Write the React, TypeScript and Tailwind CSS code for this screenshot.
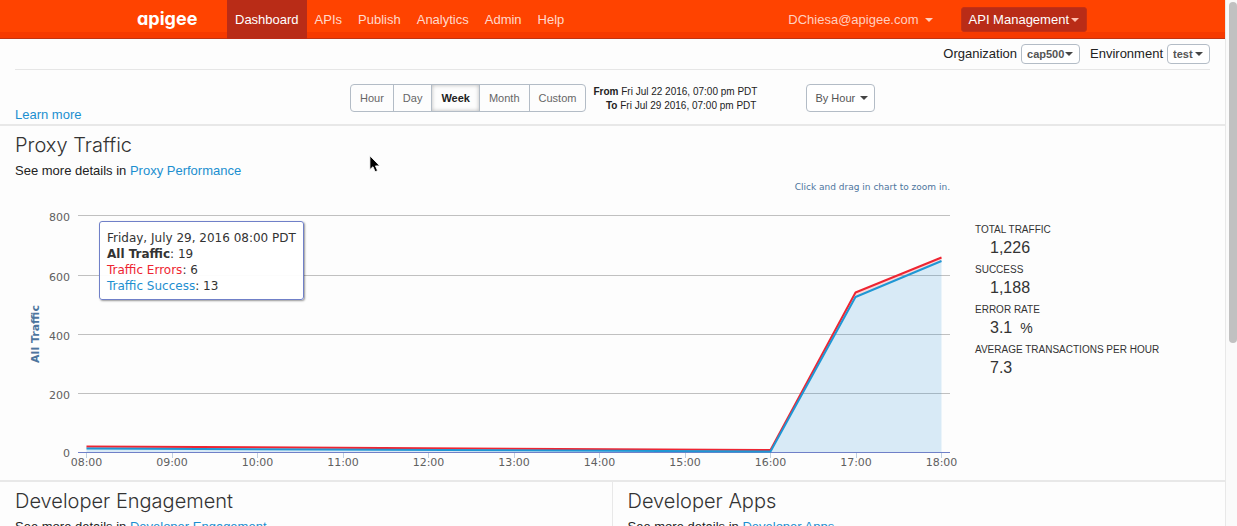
import React from "react";

const NAV_ITEMS = ["Dashboard", "APIs", "Publish", "Analytics", "Admin", "Help"];
const RANGES = ["Hour", "Day", "Week", "Month", "Custom"];
const STATS = [
  { label: "TOTAL TRAFFIC", value: "1,226" },
  { label: "SUCCESS", value: "1,188" },
  { label: "ERROR RATE", value: "3.1", unit: "%" },
  { label: "AVERAGE TRANSACTIONS PER HOUR", value: "7.3" },
];

function Caret({ className = "" }: { className?: string }) {
  return (
    <svg viewBox="0 0 8 4" aria-hidden="true" className={`h-1 w-2 shrink-0 fill-current ${className}`}>
      <path d="M0 0h8L4 4z" />
    </svg>
  );
}

function Picker({ id, label, options, className }: { id: string; label: string; options: string[]; className: string }) {
  return (
    <span className="grid items-center">
      <select
        id={id}
        aria-label={label}
        className={`col-start-1 row-start-1 appearance-none rounded-[4px] border border-[#b3bcc6] bg-white text-[11px] text-[#555] ${className}`}
      >
        {options.map((o) => (
          <option key={o}>{o}</option>
        ))}
      </select>
      <Caret className="pointer-events-none col-start-1 row-start-1 mr-[7px] justify-self-end text-[#444]" />
    </span>
  );
}

function Header() {
  return (
    <header className="flex h-[39px] items-stretch border-b border-[#c23412] bg-linear-to-b from-[#ff4300] from-[32px] to-[#f63a00] to-[32px] text-[13px] text-[#ffd9cc]">
      <a
        href="#home"
        className="ml-[137px] flex w-[90px] items-center pb-[2px] font-['Inter','Liberation_Sans',sans-serif] text-[18px] font-bold text-white [font-feature-settings:'cv11']"
      >
        apigee
      </a>
      <nav className="flex">
        {NAV_ITEMS.map((item, i) => (
          <a
            key={item}
            href={`#${item.toLowerCase()}`}
            className={i === 0 ? "-mb-px flex items-center bg-[#b92c17] px-2 text-white" : "-mb-px flex items-center px-2"}
          >
            {item}
          </a>
        ))}
      </nav>
      <div className="-mb-px mr-[138px] ml-auto flex items-center gap-7">
        <button type="button" className="flex items-center gap-[6px] text-[#ffd0c0]">
          DChiesa@apigee.com <Caret />
        </button>
        <button type="button" className="flex h-[25px] items-center gap-[2px] rounded-[3px] border border-[#c53013] bg-[#b92c17] px-[7px] text-white">
          API Management <Caret className="text-[#ffc0b0]" />
        </button>
      </div>
    </header>
  );
}

const CHART_FONT = "font-['DejaVu_Sans',sans-serif]";

function TrafficChart() {
  const hours = ["08:00", "09:00", "10:00", "11:00", "12:00", "13:00", "14:00", "15:00", "16:00", "17:00", "18:00"];
  const gridRows = [
    { label: "800", y: 35 },
    { label: "600", y: 95 },
    { label: "400", y: 154 },
    { label: "200", y: 213 },
  ];
  const x = (i: number) => 71.5 + i * 85.5;
  return (
    <svg viewBox="0 0 945 294" className={`block w-full text-[11px] ${CHART_FONT}`} role="img" aria-label="Proxy traffic by hour">
      <text x="935" y="10" textAnchor="end" className="fill-[#4d759e] text-[9px]">
        Click and drag in chart to zoom in.
      </text>
      <text transform="translate(24 154) rotate(-90)" textAnchor="middle" className="fill-[#4d759e] text-[11px] font-bold">
        All Traffic
      </text>
      {gridRows.map((r) => (
        <g key={r.label}>
          <rect x="63" y={r.y} width="872" height="1" fill="#c0c0c0" />
          <text x="55" y={r.y + 6} textAnchor="end" className="fill-[#606060]">
            {r.label}
          </text>
        </g>
      ))}
      <text x="55" y="277" textAnchor="end" className="fill-[#606060]">
        0
      </text>
      <path d="M71.5 266.5L755.5 270L840.5 112.5L926.5 77.5V81L840.5 117L755.5 271.5L71.5 268.5Z" fill="#ee2c37" fillOpacity=".17" />
      <path d="M71.5 268.5L755.5 271.5L840.5 117L926.5 81V272H71.5Z" fill="#1a8bd4" fillOpacity=".16" />
      <rect x="63" y="272" width="872" height="1" fill="#7080c8" />
      {hours.map((h, i) => (
        <g key={h}>
          <rect x={Math.floor(x(i))} y="273" width="1" height="5" fill="#c0d0e0" />
          <text x={x(i)} y="286" textAnchor="middle" className="fill-[#606060]">
            {h}
          </text>
        </g>
      ))}
      <path d="M71.5 266.5L755.5 270L840.5 112.5L926.5 77.5" fill="none" stroke="#ee2532" strokeWidth="2" strokeLinejoin="round" />
      <path d="M71.5 268.5L755.5 271.5L840.5 117L926.5 81" fill="none" stroke="#1f97d4" strokeWidth="2" strokeLinejoin="round" />
    </svg>
  );
}

function ChartTooltip() {
  return (
    <div
      className={`absolute top-[41px] left-[84px] rounded-[3px] border border-[#7080c8] bg-white/95 px-[7px] pt-2 pb-[5px] text-[12px] leading-4 whitespace-nowrap text-[#333] shadow-[1px_1px_2px_#0006] ${CHART_FONT}`}
    >
      <div>Friday, July 29, 2016 08:00 PDT</div>
      <div>
        <b>All Traffic</b>: 19
      </div>
      <div>
        <span className="text-[#ee2532]">Traffic Errors</span>: 6
      </div>
      <div>
        <span className="text-[#1f8fd0]">Traffic Success</span>: 13
      </div>
    </div>
  );
}

function PanelTitle({ title, link }: { title: string; link: string }) {
  return (
    <>
      <h2 className="font-['Inter','Liberation_Sans',sans-serif] text-[20px] leading-[38px] font-light text-[#333]">{title}</h2>
      <p className="leading-[14px] text-[#222]">
        See more details in{" "}
        <a href="#details" className="text-[#1b8fd0]">
          {link}
        </a>
      </p>
    </>
  );
}

export default function App() {
  return (
    <div className="flex h-screen overflow-hidden bg-[#fdfdfd] font-['Liberation_Sans',Arial,sans-serif] text-[13px] text-[#333]">
      <div className="min-w-0 flex-1">
        <Header />
        <div className="mx-[15px] flex h-[31px] items-center justify-end gap-[10px] border-b border-[#e6e6e6] text-[#222]">
          <div className="flex items-center gap-1">
            <label htmlFor="org">Organization</label>
            <Picker id="org" label="Organization" options={["cap500"]} className="h-5 w-[59px] pl-[5px] font-bold" />
          </div>
          <div className="flex items-center gap-1">
            <label htmlFor="env">Environment</label>
            <Picker id="env" label="Environment" options={["test", "prod"]} className="h-5 w-[43px] pl-[5px] font-bold" />
          </div>
        </div>

        <div className="flex h-[54px] items-end px-[15px]">
          <a href="#learn" className="w-[335px] leading-[18px] text-[#1b8fd0]">
            Learn more
          </a>
          <div className="flex items-center self-end pb-[11px]">
            <div className="flex h-7 overflow-hidden rounded-[4px] border border-[#b3bcc6] text-[11px] text-[#666]">
              {RANGES.map((r, i) => (
                <button
                  key={r}
                  type="button"
                  aria-pressed={r === "Week"}
                  className={`px-[9px] pt-px ${i > 0 ? "border-l border-[#b3bcc6]" : ""} ${r === "Week" ? "font-bold text-[#222] shadow-[inset_0_0_4px_#0004]" : ""}`}
                >
                  {r}
                </button>
              ))}
            </div>
            <p className="mt-[2px] ml-[7px] w-[163px] text-right text-[10px] leading-[14px] whitespace-nowrap text-[#222]">
              <b className="font-semibold">From</b> Fri Jul 22 2016, 07:00 pm PDT
              <br />
              <b className="font-semibold">To</b> Fri Jul 29 2016, 07:00 pm PDT
            </p>
            <div className="ml-[50px]">
              <Picker id="unit" label="Aggregate by" options={["By Hour", "By Day"]} className="h-7 w-[69px] pt-px pl-2" />
            </div>
          </div>
        </div>

        <section className="border-t-2 border-[#e8e8e8]">
          <div className="px-[15px]">
            <PanelTitle title="Proxy Traffic" link="Proxy Performance" />
          </div>
          <div className="flex pt-[2px]">
            <div className="relative ml-[15px] min-w-0 flex-1">
              <TrafficChart />
              <ChartTooltip />
            </div>
            <dl className="w-[265px] shrink-0 pt-[41px] pl-[15px]">
              {STATS.map((s) => (
                <div key={s.label} className="h-10">
                  <dt className="text-[10px] leading-[18px]">{s.label}</dt>
                  <dd className="pl-[15px] text-[16px] leading-[18px]">
                    {s.value}
                    {s.unit && <span className="ml-2 text-[14px]">{s.unit}</span>}
                  </dd>
                </div>
              ))}
            </dl>
          </div>
        </section>

        <div className="mt-[6px] grid grid-cols-2 border-t-2 border-[#e8e8e8]">
          <section className="h-40 border-r border-[#e8e8e8] pl-[15px]">
            <PanelTitle title="Developer Engagement" link="Developer Engagement" />
          </section>
          <section className="h-40 pl-[15px]">
            <PanelTitle title="Developer Apps" link="Developer Apps" />
          </section>
        </div>
      </div>
      <div className="flex w-3 shrink-0 flex-col border-l border-[#e8e8e8] bg-[#fafafa] pt-[2px] pl-[3px]">
        <div className="h-[65%] rounded-full bg-[#c1c1c1]" />
      </div>
      <svg viewBox="0 0 12 19" aria-hidden="true" className="pointer-events-none absolute top-[155px] left-[369px] h-[18px] w-3">
        <path d="M.6.8v14.6l3.3-3 2.2 5.2 2.6-1.1-2.2-5H11z" fill="#000" stroke="#fff" strokeWidth=".9" />
      </svg>
    </div>
  );
}
